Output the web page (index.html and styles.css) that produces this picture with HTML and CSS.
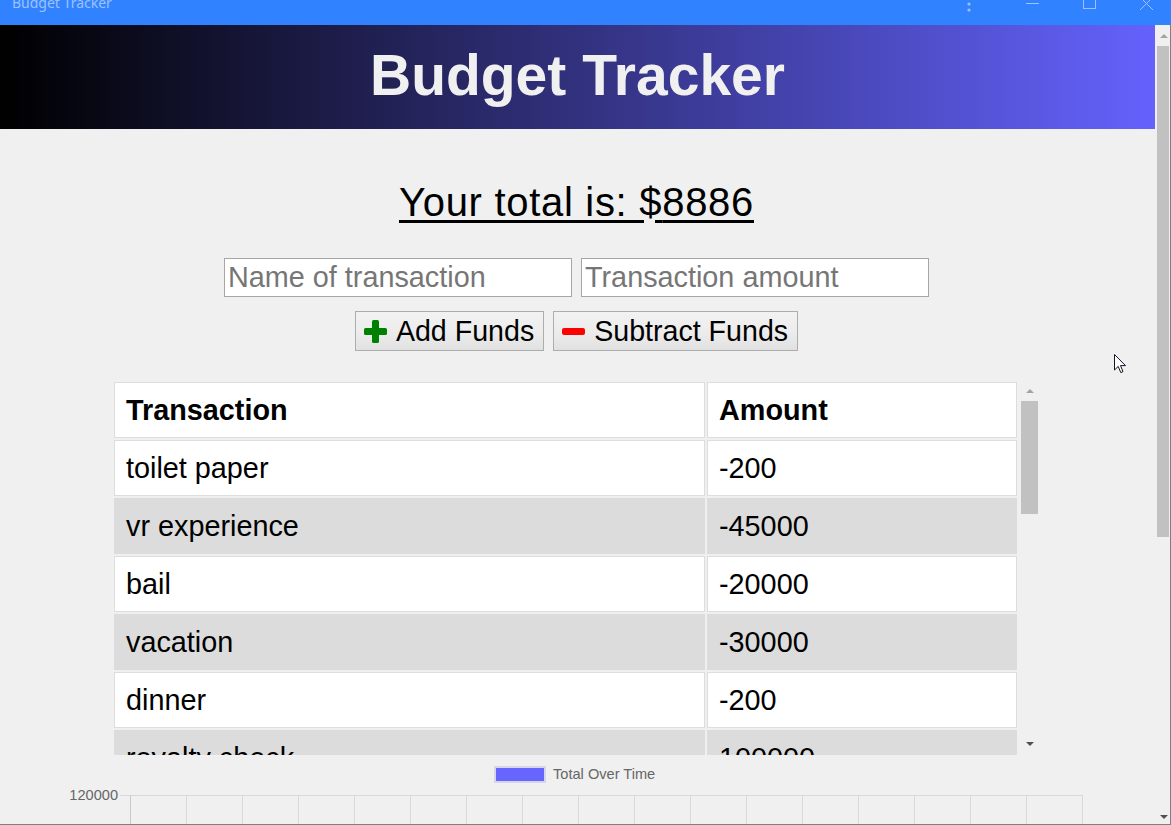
FILE: index.html
```html
<!DOCTYPE html>
<html lang="en">
<head>
<meta charset="utf-8">
<title>Budget Tracker</title>
<link rel="stylesheet" href="styles.css">
</head>
<body>
<div class="window">
  <div class="titlebar">
    <span class="app-title">Budget Tracker</span>
    <svg class="win-controls" width="240" height="25" viewBox="0 0 240 25">
      <g fill="#9cc2ff">
        <circle cx="38" cy="-2" r="1.6"/>
        <circle cx="38" cy="4" r="1.6"/>
        <circle cx="38" cy="10" r="1.6"/>
      </g>
      <g stroke="#9cc2ff" stroke-width="1" fill="none">
        <line x1="95" y1="3.5" x2="108" y2="3.5"/>
        <rect x="152.5" y="-3.5" width="12" height="12"/>
        <line x1="209" y1="-3" x2="222" y2="10"/>
        <line x1="222" y1="-3" x2="209" y2="10"/>
      </g>
    </svg>
  </div>
  <div class="viewport">
    <div class="page">
      <header class="banner">
        <h1 class="banner-title">Budget Tracker</h1>
      </header>
      <main class="content">
        <h2 class="total"><span class="ul">Your total is: </span><span class="dollar">$</span><span class="ul">8886</span></h2>
        <form class="entry">
          <div class="entry-row">
            <input class="field" type="text" placeholder="Name of transaction">
            <input class="field" type="text" placeholder="Transaction amount">
          </div>
          <div class="entry-row buttons">
            <button class="btn" type="button">
              <svg class="btn-icon" width="23" height="23" viewBox="0 0 23 23"><rect x="8" y="0" width="7" height="23" rx="1.5" fill="#008000"/><rect x="0" y="8" width="23" height="7" rx="1.5" fill="#008000"/></svg>
              <span>Add Funds</span>
            </button>
            <button class="btn" type="button">
              <svg class="btn-icon" width="23" height="23" viewBox="0 0 23 23"><rect x="0" y="8" width="23" height="7" rx="2" fill="#ff0000"/></svg>
              <span>Subtract Funds</span>
            </button>
          </div>
        </form>
        <div class="table-wrap">
          <div class="table-scroll">
            <table class="tx-table">
              <colgroup><col class="col-name"><col class="col-amount"></colgroup>
              <thead>
                <tr><th>Transaction</th><th>Amount</th></tr>
              </thead>
              <tbody>
                <tr><td>toilet paper</td><td>-200</td></tr>
                <tr><td>vr experience</td><td>-45000</td></tr>
                <tr><td>bail</td><td>-20000</td></tr>
                <tr><td>vacation</td><td>-30000</td></tr>
                <tr><td>dinner</td><td>-200</td></tr>
                <tr><td>royalty check</td><td>100000</td></tr>
                <tr><td>groceries</td><td>-350</td></tr>
              </tbody>
            </table>
          </div>
          <div class="mini-scrollbar">
            <div class="msb-up"><span class="tri-up light"></span></div>
            <div class="msb-thumb"></div>
            <div class="msb-track"></div>
            <div class="msb-down"><span class="tri-down"></span></div>
          </div>
        </div>
        <svg class="chart" width="1155" height="100" viewBox="0 0 1155 100">
          <rect x="495" y="12" width="50" height="15" fill="#6666ff" stroke="#d6d6e8" stroke-width="2"/>
          <text x="553" y="23.5" class="chart-text">Total Over Time</text>
          <text x="118" y="44.5" class="chart-text" text-anchor="end">120000</text>
          <g stroke="#d9d9d9" stroke-width="1">
            <line x1="120" y1="40.5" x2="1083" y2="40.5"/>
            <line x1="130.5" y1="40" x2="130.5" y2="100" stroke="#c8c8c8"/>
            <line x1="186.5" y1="40" x2="186.5" y2="100"/>
            <line x1="242.5" y1="40" x2="242.5" y2="100"/>
            <line x1="298.5" y1="40" x2="298.5" y2="100"/>
            <line x1="354.5" y1="40" x2="354.5" y2="100"/>
            <line x1="410.5" y1="40" x2="410.5" y2="100"/>
            <line x1="466.5" y1="40" x2="466.5" y2="100"/>
            <line x1="522.5" y1="40" x2="522.5" y2="100"/>
            <line x1="578.5" y1="40" x2="578.5" y2="100"/>
            <line x1="634.5" y1="40" x2="634.5" y2="100"/>
            <line x1="690.5" y1="40" x2="690.5" y2="100"/>
            <line x1="746.5" y1="40" x2="746.5" y2="100"/>
            <line x1="802.5" y1="40" x2="802.5" y2="100"/>
            <line x1="858.5" y1="40" x2="858.5" y2="100"/>
            <line x1="914.5" y1="40" x2="914.5" y2="100"/>
            <line x1="970.5" y1="40" x2="970.5" y2="100"/>
            <line x1="1026.5" y1="40" x2="1026.5" y2="100"/>
            <line x1="1082.5" y1="40" x2="1082.5" y2="100"/>
          </g>
        </svg>
      </main>
    </div>
    <div class="page-scrollbar">
      <div class="psb-up"><span class="tri-up light"></span></div>
      <div class="psb-thumb"></div>
      <div class="psb-track"></div>
      <div class="psb-down"><span class="tri-down"></span></div>
    </div>
  </div>
  <svg class="cursor" width="13" height="20" viewBox="0 0 13 20">
    <path d="M0.5 0.5 L0.5 16 L4.2 12.4 L6.8 18.6 L9 17.6 L6.5 11.6 L11.5 11.6 Z" fill="#ffffff" stroke="#14142a" stroke-width="1" stroke-linejoin="miter"/>
  </svg>
</div>
</body>
</html>
```
FILE: styles.css
```css
* { box-sizing: border-box; }

html, body {
  margin: 0;
  padding: 0;
  background: #f0f0f0;
  overflow: hidden;
}

body {
  font-family: "Liberation Sans", Arial, sans-serif;
  color: #000;
}

.window {
  position: relative;
  width: 1171px;
  height: 825px;
  display: flex;
  flex-direction: column;
}

/* title bar */
.titlebar {
  height: 25px;
  background: #3182ff;
  display: flex;
  justify-content: space-between;
  align-items: flex-start;
  overflow: hidden;
}

.app-title {
  font-family: "Noto Sans", "Open Sans", sans-serif;
  font-size: 14px;
  line-height: 14px;
  color: #9cc2ff;
  margin: -4px 0 0 12px;
}

.win-controls {
  display: block;
}

/* viewport */
.viewport {
  flex: 1;
  display: flex;
  border-right: 1px solid #7f7f7f;
  border-bottom: 1px solid #7f7f7f;
  overflow: hidden;
}

.page {
  width: 1155px;
  flex: none;
  overflow: hidden;
  background: #f0f0f0;
}

.banner {
  height: 104px;
  background: linear-gradient(to right, #000000, #6462fc);
  padding-top: 18px;
}

.banner-title {
  margin: 0;
  font-size: 57px;
  line-height: 65px;
  font-weight: bold;
  color: #f0f0f0;
  text-align: center;
}

.content {
  display: flex;
  flex-direction: column;
  align-items: center;
}

.total {
  margin: 50px 2px 0 0;
  font-size: 40px;
  line-height: 46px;
  font-weight: normal;
  letter-spacing: 0.7px;
}

.total .ul {
  text-decoration: underline;
  text-decoration-thickness: 3px;
  text-underline-offset: 4px;
}

.total .dollar {
  background-image: linear-gradient(to right, #000 0, #000 5px, transparent 5px, transparent 16px, #000 16px);
  background-repeat: no-repeat;
  background-size: 100% 3px;
  background-position: 0 40px;
}

.entry {
  margin: 33px 2px 0 0;
  display: flex;
  flex-direction: column;
  align-items: center;
  gap: 14px;
}

.entry-row {
  display: flex;
  gap: 9px;
}

.field {
  width: 348px;
  height: 39px;
  margin: 0;
  padding: 0 3px;
  border: 1px solid #a6a6a6;
  background: #fff;
  font-family: "Liberation Sans", Arial, sans-serif;
  font-size: 28.8px;
  color: #000;
  outline: none;
}

.field::placeholder {
  color: #767676;
}

.btn {
  height: 40px;
  margin: 0;
  padding: 0 9px 0 8px;
  display: flex;
  align-items: center;
  gap: 9px;
  border: 1px solid #adadad;
  border-radius: 0;
  background: linear-gradient(#f2f2f2 0%, #ececec 55%, #e1e1e1 100%);
  font-family: "Liberation Sans", Arial, sans-serif;
  font-size: 28.6px;
  line-height: 33px;
  color: #000;
}

.btn-icon {
  display: block;
  flex: none;
}

/* table */
.table-wrap {
  margin-top: 31px;
  width: 927px;
  height: 373px;
  display: flex;
  gap: 4px;
  overflow: hidden;
}

.table-scroll {
  width: 903px;
  flex: none;
  height: 373px;
  overflow: hidden;
}

.tx-table {
  margin: -2px 0 0 -2px;
  width: 907px;
  border-collapse: separate;
  border-spacing: 2px;
  table-layout: fixed;
  font-size: 28.8px;
}

.col-name { width: 591px; }
.col-amount { width: 310px; }

.tx-table th,
.tx-table td {
  height: 56px;
  padding: 0 11px;
  border: 1px solid #dddddd;
  background: #ffffff;
  text-align: left;
  vertical-align: middle;
  line-height: 33px;
  white-space: nowrap;
}

.tx-table th {
  font-weight: bold;
}

.tx-table tbody tr:nth-child(even) td {
  background: #dcdcdc;
  border-color: #dcdcdc;
}

.mini-scrollbar {
  width: 17px;
  flex: none;
  display: flex;
  flex-direction: column;
}

.msb-up {
  height: 17px;
  display: flex;
  align-items: center;
  justify-content: center;
}

.msb-thumb {
  margin-top: 2px;
  height: 113px;
  background: #c1c1c1;
}

.msb-track { flex: 1; }

.msb-down {
  height: 23px;
  display: flex;
  align-items: center;
  justify-content: center;
}

.tri-up {
  width: 0;
  height: 0;
  border-left: 4px solid transparent;
  border-right: 4px solid transparent;
  border-bottom: 4px solid #505050;
}

.tri-up.light { border-bottom-color: #a3a3a3; }

.tri-down {
  width: 0;
  height: 0;
  border-left: 4px solid transparent;
  border-right: 4px solid transparent;
  border-top: 4px solid #505050;
}

/* chart */
.chart {
  display: block;
  flex: none;
}

.chart-text {
  font-family: "Liberation Sans", Arial, sans-serif;
  font-size: 14.6px;
  fill: #666666;
}

/* page scrollbar */
.page-scrollbar {
  width: 15px;
  flex: none;
  display: flex;
  flex-direction: column;
  background: #f0f0f0;
}

.psb-up {
  height: 21px;
  display: flex;
  align-items: center;
  justify-content: center;
  padding-left: 2px;
}

.psb-thumb {
  height: 491px;
  margin-left: 2px;
  width: 12px;
  background: #c1c1c1;
}

.psb-track { flex: 1; }

.psb-down {
  height: 14px;
  display: flex;
  align-items: center;
  justify-content: center;
  padding-left: 2px;
}

.cursor {
  position: absolute;
  left: 1114px;
  top: 354px;
  display: block;
}
```
